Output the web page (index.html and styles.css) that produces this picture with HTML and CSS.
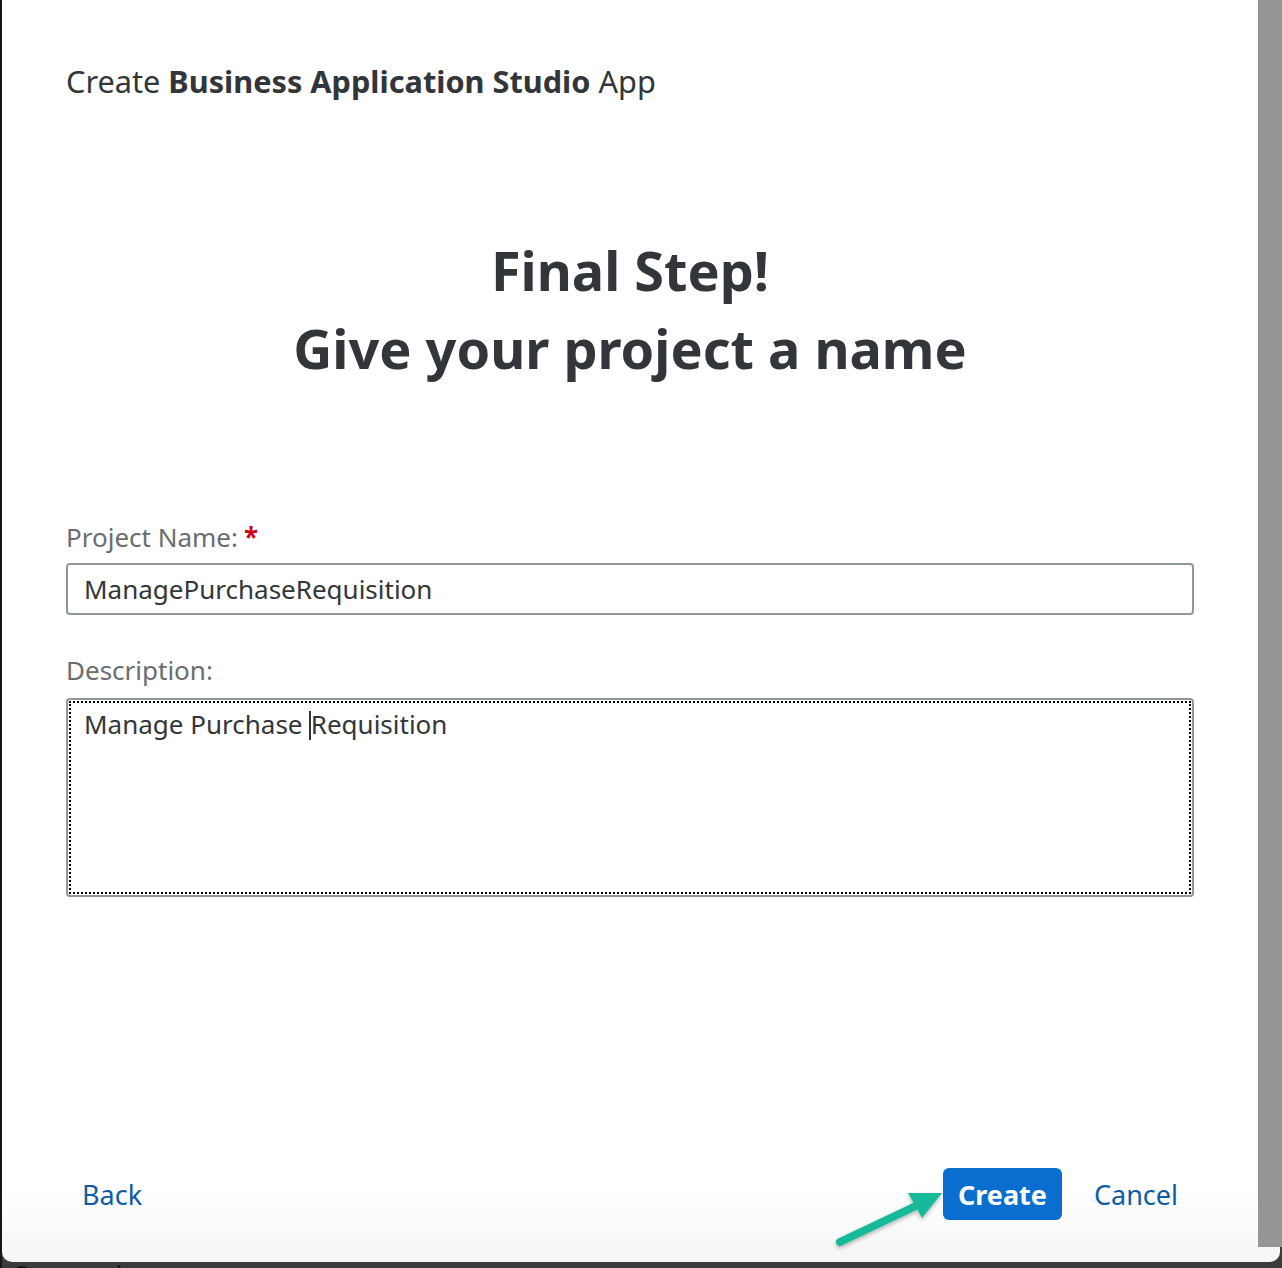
FILE: index.html
```html
<!DOCTYPE html>
<html>
<head>
<meta charset="utf-8">
<link rel="stylesheet" href="styles.css">
</head>
<body>
<div class="page">
  <div class="dialog">
    <div class="title">Create <b>Business Application Studio</b> App</div>
    <h1 class="heading">Final Step!<br>Give your project a name</h1>
    <div class="label">Project Name:<span class="req">*</span></div>
    <div class="input">ManagePurchaseRequisition</div>
    <div class="label label-desc">Description:</div>
    <div class="textarea"><div class="focus">Manage Purchase <span class="caret"></span>Requisition</div></div>
    <div class="footer">
      <button class="btn link">Back</button>
      <div class="spacer"></div>
      <button class="btn primary">Create</button>
      <button class="btn link">Cancel</button>
    </div>
    <svg class="arrow" width="130" height="80" viewBox="0 0 130 80">
      <defs>
        <filter id="sh" x="-20%" y="-20%" width="140%" height="140%">
          <feDropShadow dx="0" dy="2" stdDeviation="2" flood-color="#000" flood-opacity="0.3"/>
        </filter>
      </defs>
      <g filter="url(#sh)">
        <line x1="12" y1="68" x2="92" y2="30" stroke="#17b99a" stroke-width="8" stroke-linecap="round"/>
        <polygon points="114,19 80,19 94,44" fill="#17b99a"/>
      </g>
    </svg>
  </div>
  <div class="behind">Onwards</div>
  <div class="scrollbar"></div>
</div>
</body>
</html>
```
FILE: styles.css
```css
html, body {
  margin: 0;
  padding: 0;
}
body {
  background: #3b3b3b;
  font-family: "Noto Sans", "Open Sans", sans-serif;
  width: 1282px;
  height: 1268px;
  overflow: hidden;
}
.page {
  position: relative;
  padding-left: 2px;
  height: 1268px;
  background: linear-gradient(to right, #111 0, #1c1c2c 2px, #3b3b3b 2px);
}
.dialog {
  position: relative;
  width: 1278px;
  height: 1262px;
  box-sizing: border-box;
  background: linear-gradient(to bottom, #fff 0, #fff 1190px, #f6f6f6 1262px);
  border-radius: 0 0 10px 10px;
  padding: 61px 86px 42px 64px;
  display: flex;
  flex-direction: column;
  color: #32363a;
}
.title {
  font-size: 30.7px;
  line-height: 40px;
  color: #32363a;
}
.title b {
  font-weight: 700;
}
.heading {
  margin: 130px 0 0;
  font-size: 54px;
  line-height: 78px;
  font-weight: 700;
  text-align: center;
  color: #32363a;
}
.label {
  margin-top: 134px;
  font-size: 26px;
  line-height: 32px;
  color: #6a6d70;
}
.label-desc {
  margin-top: 39px;
}
.req {
  color: #d0021b;
  margin-left: 6px;
  font-weight: 700;
}
.input {
  margin-top: 10px;
  height: 52px;
  box-sizing: border-box;
  border: 2px solid #8e969e;
  border-radius: 4px;
  display: flex;
  align-items: center;
  padding: 0 16px;
  font-size: 26px;
  color: #32363a;
}
.textarea {
  margin-top: 12px;
  height: 199px;
  box-sizing: border-box;
  border: 2px solid #8e969e;
  border-radius: 4px;
  padding: 1px;
}
.focus {
  height: 100%;
  box-sizing: border-box;
  border: 2px dotted #000;
  padding: 5px 13px;
  font-size: 26px;
  line-height: 32px;
  color: #32363a;
}
.caret {
  display: inline-block;
  width: 1.5px;
  height: 29px;
  background: #32363a;
  vertical-align: -6px;
}
.footer {
  margin-top: auto;
  display: flex;
  align-items: center;
  gap: 16px;
}
.spacer {
  flex: 1;
}
.btn {
  font-family: inherit;
  font-size: 27px;
  height: 52px;
  border: none;
  background: none;
  padding: 0 16px;
  cursor: pointer;
  border-radius: 6px;
}
.link {
  color: #0e5ca8;
}
.primary {
  background: #0a6ed1;
  color: #fff;
  font-weight: 700;
  padding: 0 15px;
}
.arrow {
  position: absolute;
  left: 826px;
  top: 1174px;
}
.behind {
  height: 6px;
  overflow: hidden;
  font-size: 30px;
  line-height: 30px;
  color: #1a1a1a;
  padding-left: 8px;
}
.scrollbar {
  position: absolute;
  right: 0;
  top: 0;
  width: 24px;
  height: 1247px;
  background: #959595;
}
```
